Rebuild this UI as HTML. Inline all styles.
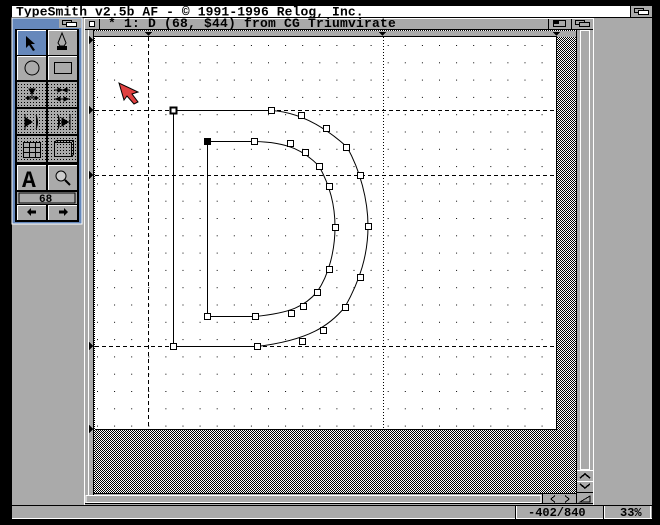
<!DOCTYPE html>
<html><head><style>
html,body{margin:0;padding:0;background:#000;}
svg{display:block}
text{font-family:"Liberation Mono",monospace;font-weight:bold;}
</style></head><body>
<svg width="660" height="525" viewBox="0 0 660 525" xmlns="http://www.w3.org/2000/svg" shape-rendering="crispEdges">
<defs>
<pattern id="chk" width="2" height="2" patternUnits="userSpaceOnUse"><rect width="2" height="2" fill="#fff"/><rect width="1" height="1" fill="#000"/><rect x="1" y="1" width="1" height="1" fill="#000"/></pattern>
<pattern id="dot" width="3" height="3" patternUnits="userSpaceOnUse"><rect width="3" height="3" fill="#aaa"/><rect width="1" height="1" fill="#000"/></pattern>
<pattern id="grid" x="97" y="45" width="17.1" height="17.3" patternUnits="userSpaceOnUse"><rect width="1" height="1" fill="#000"/></pattern>
</defs>
<rect width="660" height="525" fill="#000"/>
<!-- screen -->
<rect x="12" y="6" width="640" height="514" fill="#aaa"/>
<rect x="12" y="6" width="618" height="11" fill="#fff"/>
<rect x="12" y="17" width="640" height="1" fill="#000"/>
<text x="16" y="15.5" font-size="13" fill="#000" letter-spacing="0.1">TypeSmith v2.5b AF - © 1991-1996 Relog, Inc.</text>
<rect x="630" y="6" width="1" height="11" fill="#000"/>
<g fill="none" stroke="#000"><rect x="634.5" y="8.5" width="9" height="4"/><rect x="638.5" y="10.5" width="10" height="4" fill="#fff"/></g>

<!-- toolbox -->
<rect x="12" y="18" width="70" height="206" fill="#6688bb"/>
<rect x="12" y="18" width="70" height="206" fill="none" stroke="#fff" stroke-width="1"/>
<rect x="59" y="19" width="22" height="9" fill="#aaa"/>
<g fill="none" stroke="#000"><rect x="62.5" y="20.5" width="9" height="4"/><rect x="66.5" y="22.5" width="10" height="4" fill="#fff"/></g>
<rect x="15" y="29" width="64" height="193" fill="#000"/>
<rect x="17" y="30" width="29" height="25" fill="#6688bb"/>
<rect x="48" y="30" width="29" height="25" fill="#aaa"/>
<rect x="17" y="56" width="29" height="24" fill="#aaa"/>
<rect x="48" y="56" width="29" height="24" fill="#aaa"/>
<rect x="17" y="82" width="29" height="25" fill="url(#dot)"/>
<rect x="48" y="82" width="29" height="25" fill="url(#dot)"/>
<rect x="17" y="109" width="29" height="25" fill="url(#dot)"/>
<rect x="48" y="109" width="29" height="25" fill="url(#dot)"/>
<rect x="17" y="136" width="29" height="26" fill="url(#dot)"/>
<rect x="48" y="136" width="29" height="26" fill="url(#dot)"/>
<rect x="17" y="165" width="29" height="25" fill="#aaa"/>
<rect x="48" y="165" width="29" height="25" fill="#aaa"/>
<rect x="17" y="192" width="60" height="12" fill="#aaa"/>
<rect x="19" y="193" width="56" height="10" fill="#aaa" stroke="#000" stroke-width="1"/>
<rect x="17" y="205" width="29" height="15" fill="#aaa"/>
<rect x="48" y="205" width="29" height="15" fill="#aaa"/>
<g stroke="#fff" stroke-width="1" fill="none">
<path d="M17.5 55V30.5H46"/><path d="M48.5 55V30.5H77"/><path d="M17.5 80V56.5H46"/><path d="M48.5 80V56.5H77"/>
<path d="M17.5 190V165.5H46"/><path d="M48.5 190V165.5H77"/><path d="M17.5 220V205.5H46"/><path d="M48.5 220V205.5H77"/>
</g>
<g shape-rendering="auto">
<path d="M26 36 L26 48 L29 45 L33 51 L35 50 L31 44 L35 44 Z" fill="#000"/>
<path d="M62 33 L58 43 L60 46 L64 46 L66 43 Z" fill="none" stroke="#000"/>
<rect x="57" y="46" width="10" height="4" fill="#000"/>
<circle cx="32" cy="68" r="7" fill="none" stroke="#000"/>
<rect x="54.5" y="62.5" width="17" height="11" fill="none" stroke="#000"/>
<path d="M26 98H38M32 88V98M29 89L35 89L32 94Z M26 98l3-1.5v3z M38 98l-3-1.5v3z" stroke="#000" fill="#000"/>
<path d="M54 90h16M54 99h16M58 88l4 2-4 2zM67 88l-4 2 4 2zM60 97l-4 2 4 2zM64 97l4 2-4 2z" stroke="#000" fill="#000"/>
<path d="M25 114v16M26 118l6 4-6 4z M36 115q3 7 0 14" stroke="#000" fill="#000"/>
<path d="M58 115q3 7 0 14M61 122h9M62 118l6 4-6 4z M70 114v16" stroke="#000" fill="#000"/>
<rect x="23.5" y="142.5" width="17" height="15" fill="#aaa" stroke="#000"/>
<path d="M29.5 142v16M35.5 142v16M23 147.5h18M23 152.5h18" stroke="#000"/>
<rect x="54.5" y="142.5" width="17" height="14" fill="none" stroke="#000"/>
<path d="M54.5 142.5l2-2h17v14l-2 2" fill="none" stroke="#000"/>
<text x="22" y="187" font-family="Liberation Serif,serif" font-weight="normal" font-size="23" fill="#000">A</text>
<circle cx="61" cy="176" r="5" fill="#ccc" stroke="#000"/>
<path d="M65 180l5 5" stroke="#000" stroke-width="2"/>
<path d="M27 212l4-4v2.5h5v3h-5v2.5z" fill="#000"/>
<path d="M68 212l-4-4v2.5h-5v3h5v2.5z" fill="#000"/>
</g>
<text x="39" y="202" font-size="11" fill="#000">68</text>

<!-- main window -->
<rect x="84" y="18" width="510" height="488" fill="#aaa"/>
<rect x="84.5" y="18.5" width="509" height="487" fill="none" stroke="#fff"/>
<rect x="85" y="29" width="508" height="1" fill="#000"/>
<rect x="89.5" y="21.5" width="5" height="5" fill="#fff" stroke="#000"/>
<rect x="99" y="19" width="1" height="10" fill="#000"/>
<text x="108" y="27" font-size="13" fill="#000" letter-spacing="0.2">* 1: D (68, $44) from CG Triumvirate</text>
<rect x="548" y="19" width="1" height="10" fill="#000"/>
<rect x="571" y="19" width="1" height="10" fill="#000"/>
<rect x="553.5" y="20.5" width="12" height="6" fill="#aaa" stroke="#000"/><rect x="554" y="21" width="5" height="3" fill="#000"/>
<rect x="575.5" y="20.5" width="9" height="4" fill="none" stroke="#000"/><rect x="579.5" y="22.5" width="10" height="4" fill="#aaa" stroke="#000"/>
<rect x="88" y="30" width="1" height="472" fill="#fff"/>
<rect x="93" y="30" width="1" height="465" fill="#000"/>
<!-- canvas -->
<rect x="94" y="30" width="482" height="463" fill="url(#chk)"/>
<rect x="94" y="31" width="482" height="6" fill="#aaa"/>
<rect x="94" y="36" width="463" height="1" fill="#000"/>
<rect x="95" y="37" width="461" height="392" fill="#fff"/>
<rect x="95" y="429" width="462" height="1" fill="#000"/>
<rect x="556" y="37" width="1" height="392" fill="#000"/>
<rect x="95" y="37" width="461" height="392" fill="url(#grid)"/>
<g fill="#000">
<path d="M145 32h7l-3.5 4z M379 32h7l-3.5 4z M553 32h7l-3.5 4z"/>
<path d="M89 106v8l4-4z M89 171v8l4-4z M89 342v8l4-4z M89 425v8l4-4z M89 36v8l4-4z"/>
</g>
<g stroke="#000" stroke-width="1" stroke-dasharray="4 3" fill="none">
<path d="M95 110.5H556M95 175.5H556M95 346.5H556"/>
<path d="M148.5 37V429"/>
</g>
<path d="M383.5 37V429" stroke="#000" stroke-dasharray="1 2"/>
<g fill="none" stroke="#000" stroke-width="1" shape-rendering="auto">
<path d="M173.5 110.5H271 C300 112 326 128 347 147 C360 170 368 200 368 226 C368 255 360 280 345 307 C330 325 310 340 257 346.5 H173.5Z"/>
<path d="M207.5 141.5H254 C290 142 305 152 319 166 C330 186 335 205 335 227 C335 250 329 275 317 292 C305 306 291 313 255 316.5 H207.5Z"/>
</g>
<g fill="#fff" stroke="#000">
<rect x="170.5" y="107.5" width="6" height="6" stroke-width="2"/>
<rect x="268.5" y="107.5" width="6" height="6"/><rect x="298.5" y="112.5" width="6" height="6"/><rect x="323.5" y="125.5" width="6" height="6"/><rect x="343.5" y="144.5" width="6" height="6"/><rect x="357.5" y="172.5" width="6" height="6"/><rect x="365.5" y="223.5" width="6" height="6"/><rect x="357.5" y="274.5" width="6" height="6"/><rect x="342.5" y="304.5" width="6" height="6"/><rect x="320.5" y="327.5" width="6" height="6"/><rect x="299.5" y="338.5" width="6" height="6"/><rect x="254.5" y="343.5" width="6" height="6"/><rect x="170.5" y="343.5" width="6" height="6"/>
<rect x="204.5" y="138.5" width="6" height="6" fill="#000"/>
<rect x="251.5" y="138.5" width="6" height="6"/><rect x="287.5" y="140.5" width="6" height="6"/><rect x="302.5" y="149.5" width="6" height="6"/><rect x="316.5" y="163.5" width="6" height="6"/><rect x="326.5" y="183.5" width="6" height="6"/><rect x="332.5" y="224.5" width="6" height="6"/><rect x="326.5" y="266.5" width="6" height="6"/><rect x="314.5" y="289.5" width="6" height="6"/><rect x="300.5" y="303.5" width="6" height="6"/><rect x="288.5" y="310.5" width="6" height="6"/><rect x="252.5" y="313.5" width="6" height="6"/><rect x="204.5" y="313.5" width="6" height="6"/>
</g>
<path d="M119 83 L124 100 L127 96 L134 104 L138 102 L132 94 L138 92 Z" fill="#e04040" stroke="#000" stroke-width="1" shape-rendering="auto"/>
<!-- right scrollbar -->
<rect x="576" y="30" width="1" height="474" fill="#000"/>
<rect x="580.5" y="30.5" width="9" height="439" fill="#aaa" stroke="#fff"/>
<rect x="577" y="470" width="16" height="1" fill="#fff"/>
<rect x="577" y="481" width="16" height="1" fill="#fff"/>
<rect x="577" y="492" width="16" height="1" fill="#000"/>
<path d="M580 478l5-4 5 4M580 484l5 4 5-4" fill="none" stroke="#000" stroke-width="1.5"/>
<!-- bottom scrollbar -->
<rect x="94" y="493" width="483" height="1" fill="#000"/>
<rect x="86" y="495.5" width="455" height="7" fill="#aaa" stroke="#fff"/>
<rect x="542" y="494" width="1" height="10" fill="#000"/>
<path d="M555 495.5l-4 3.5 4 3.5M565 495.5l4 3.5-4 3.5" fill="none" stroke="#000"/>
<path d="M580 502h10v-6z" fill="none" stroke="#000"/>
<rect x="85" y="503" width="508" height="1" fill="#000"/>
<!-- status bar -->
<rect x="12" y="505" width="640" height="1" fill="#000"/>
<rect x="13" y="506" width="639" height="13" fill="#aaa"/>
<rect x="12" y="518" width="640" height="1" fill="#fff"/>
<rect x="515" y="506" width="1" height="13" fill="#000"/><rect x="516" y="506" width="1" height="13" fill="#fff"/>
<rect x="603" y="506" width="1" height="13" fill="#000"/><rect x="604" y="506" width="1" height="13" fill="#fff"/>
<rect x="650" y="506" width="1" height="13" fill="#fff"/>
<text x="528" y="516" font-size="12" fill="#000">-402/840</text>
<text x="620" y="516" font-size="12" fill="#000">33%</text>
<rect x="652" y="0" width="8" height="525" fill="#000"/>
<rect x="0" y="519" width="660" height="6" fill="#000"/>
</svg>
</body></html>
